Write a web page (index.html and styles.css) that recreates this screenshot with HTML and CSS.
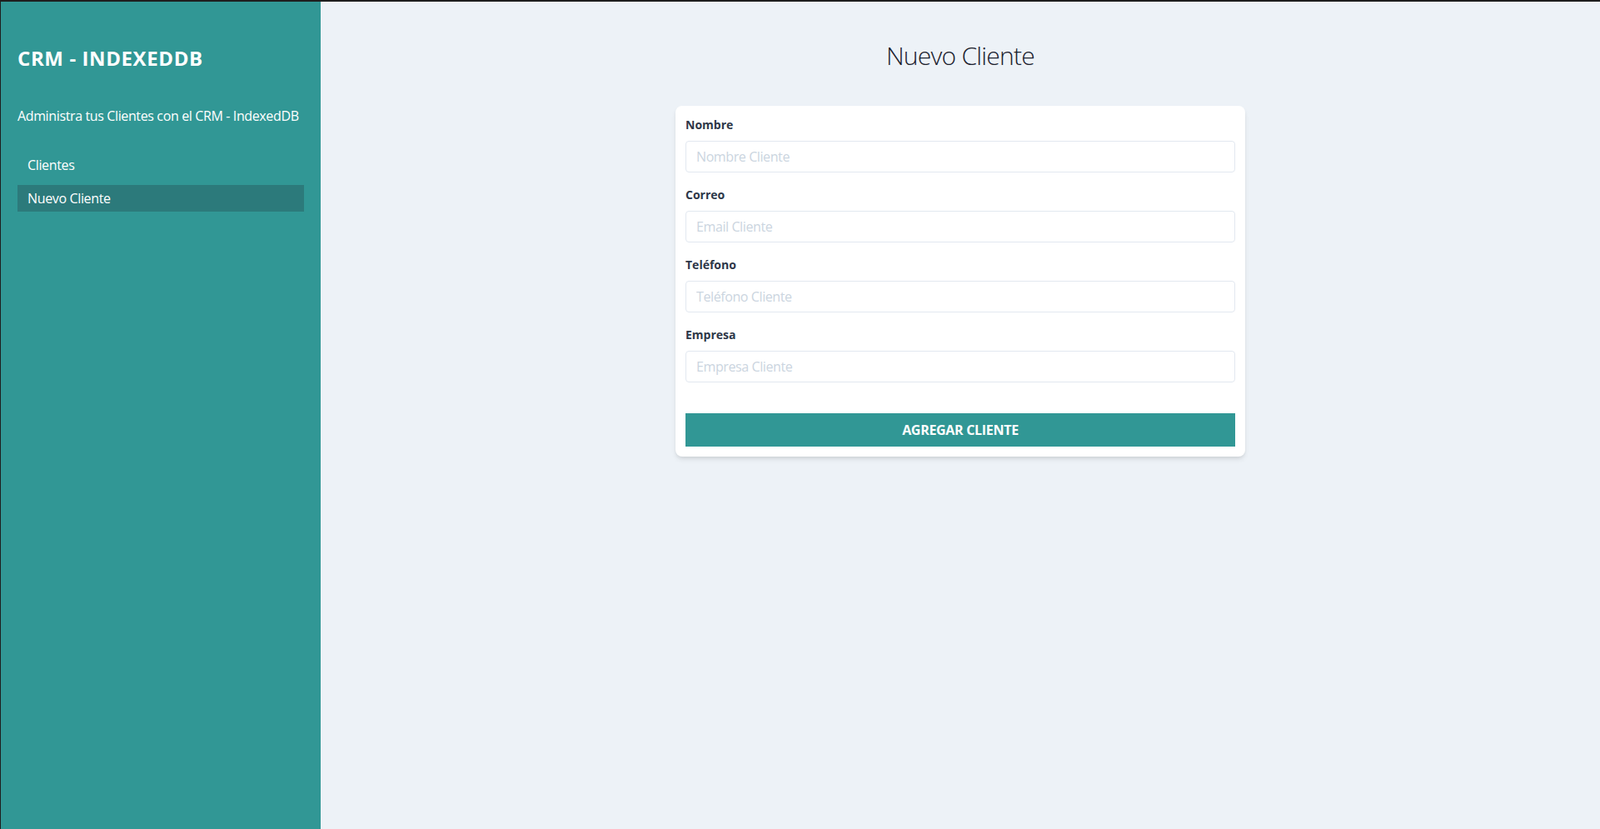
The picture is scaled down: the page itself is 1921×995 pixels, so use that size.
FILE: index.html
```html
<!DOCTYPE html>
<html lang="es">
<head>
<meta charset="utf-8">
<title>CRM - IndexedDB</title>
<link rel="stylesheet" href="styles.css">
</head>
<body>
<div class="app">
  <aside class="sidebar">
    <h1 class="brand">CRM - INDEXEDDB</h1>
    <p class="tagline">Administra tus Clientes con el CRM - IndexedDB</p>
    <nav class="nav">
      <a class="nav-link" href="#">Clientes</a>
      <a class="nav-link active" href="#">Nuevo Cliente</a>
    </nav>
  </aside>
  <main class="main">
    <h2 class="page-title">Nuevo Cliente</h2>
    <form class="card">
      <div class="field">
        <label class="label" for="nombre">Nombre</label>
        <input class="input" id="nombre" type="text" placeholder="Nombre Cliente">
      </div>
      <div class="field">
        <label class="label" for="email">Correo</label>
        <input class="input" id="email" type="email" placeholder="Email Cliente">
      </div>
      <div class="field">
        <label class="label" for="telefono">Teléfono</label>
        <input class="input" id="telefono" type="tel" placeholder="Teléfono Cliente">
      </div>
      <div class="field">
        <label class="label" for="empresa">Empresa</label>
        <input class="input" id="empresa" type="text" placeholder="Empresa Cliente">
      </div>
      <button class="submit" type="submit">Agregar Cliente</button>
    </form>
  </main>
</div>
</body>
</html>
```
FILE: styles.css
```css
* { box-sizing: border-box; }

html, body { height: 100%; }

body {
  margin: 0;
  border-top: 2px solid #1e1e1e;
  border-left: 1px solid #1e1e1e;
  font-family: "Open Sans", "Liberation Sans", sans-serif;
  color: #1a202c;
}

.app {
  display: flex;
  height: 100%;
}

.sidebar {
  width: 384px;
  flex-shrink: 0;
  background: #319795;
  color: #ffffff;
  padding: 20px;
}

.brand {
  margin: 32px 0 0;
  font-size: 24px;
  line-height: 32px;
  font-weight: 700;
  letter-spacing: 0.6px;
  white-space: nowrap;
}

.tagline {
  margin: 41px 0 0;
  font-size: 16px;
  line-height: 24px;
  letter-spacing: -0.37px;
  white-space: nowrap;
}

.nav {
  margin-top: 31px;
  display: flex;
  flex-direction: column;
  gap: 8px;
}

.nav-link {
  display: block;
  padding: 4px 12px;
  font-size: 16px;
  line-height: 24px;
  letter-spacing: -0.35px;
  color: #ffffff;
  text-decoration: none;
}

.nav-link.active { background: #2c7a7b; }

.main {
  flex: 1;
  background: #edf2f7;
}

.page-title {
  margin: 47px 0 0;
  text-align: center;
  font-size: 30px;
  line-height: 36px;
  font-weight: 300;
  letter-spacing: -0.75px;
  color: #1a202c;
}

.card {
  width: 684px;
  margin: 42px auto 0;
  background: #ffffff;
  border-radius: 8px;
  padding: 12px;
  box-shadow: 0 4px 6px -1px rgba(0,0,0,0.1), 0 2px 4px -1px rgba(0,0,0,0.06);
}

.field { margin-bottom: 16px; }

.label {
  display: block;
  margin-bottom: 8px;
  font-size: 14px;
  line-height: 22px;
  font-weight: 700;
  color: #2d3748;
}

.input {
  display: block;
  width: 100%;
  height: 38px;
  padding: 0 12px;
  border: 1px solid #e2e8f0;
  border-radius: 4px;
  font-family: inherit;
  font-size: 16px;
  letter-spacing: -0.4px;
  color: #4a5568;
  background: #ffffff;
  outline: none;
}

.input::placeholder { color: #cbd5e0; }

.submit {
  display: block;
  width: 100%;
  height: 40px;
  margin-top: 37px;
  border: 0;
  background: #319795;
  color: #ffffff;
  font-family: inherit;
  font-size: 16px;
  font-weight: 700;
  letter-spacing: -0.3px;
  text-transform: uppercase;
  cursor: pointer;
}
```
